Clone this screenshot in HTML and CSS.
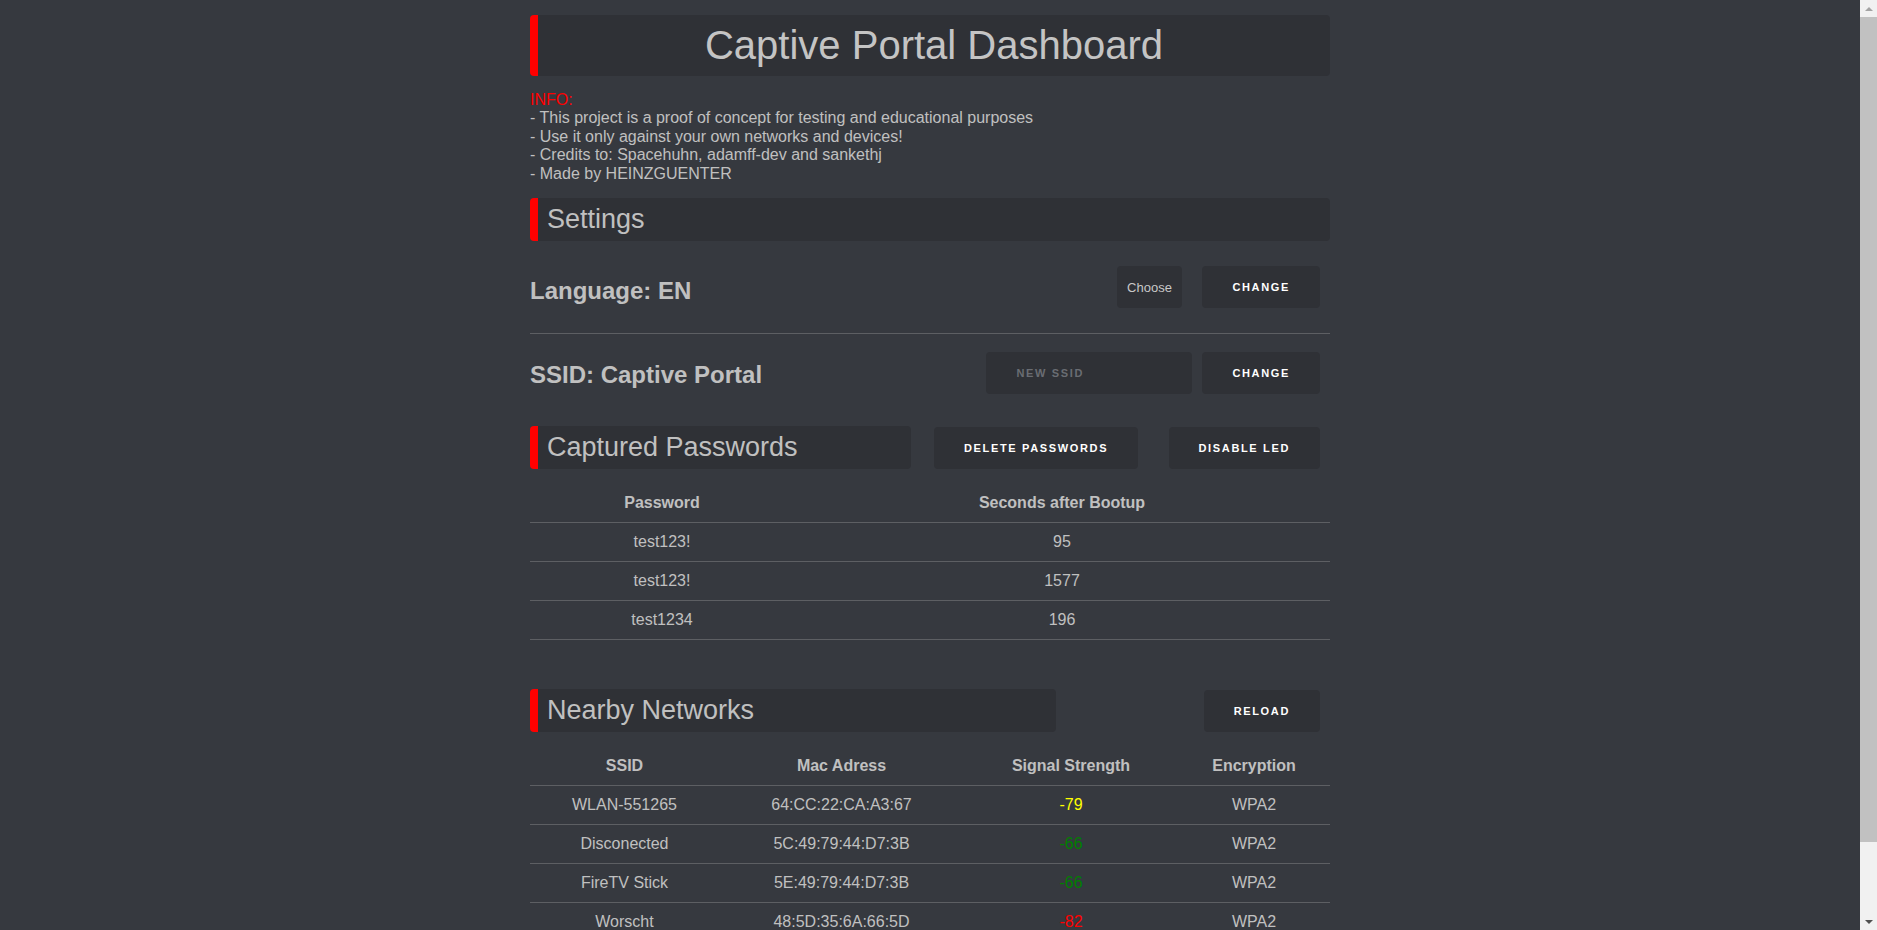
FILE: index.html
```html
<!DOCTYPE html>
<html lang="en">
<head>
<meta charset="utf-8">
<title>Captive Portal Dashboard</title>
<link rel="stylesheet" href="styles.css">
</head>
<body>
<div class="page">
  <h1 class="title-box">Captive Portal Dashboard</h1>

  <div class="info">
    <div class="info-label">INFO:</div>
    <div>- This project is a proof of concept for testing and educational purposes</div>
    <div>- Use it only against your own networks and devices!</div>
    <div>- Credits to: Spacehuhn, adamff-dev and sankethj</div>
    <div>- Made by HEINZGUENTER</div>
  </div>

  <h2 class="section-head settings-head">Settings</h2>

  <div class="setting-row lang-row">
    <span class="setting-label lang-label">Language: EN</span>
    <div class="setting-actions">
      <button class="choose">Choose</button>
      <button class="btn btn-change">CHANGE</button>
    </div>
  </div>
  <div class="divider"></div>
  <div class="setting-row ssid-row">
    <span class="setting-label ssid-label">SSID: Captive Portal</span>
    <div class="setting-actions">
      <input class="ssid-input" type="text" placeholder="NEW SSID">
      <button class="btn btn-change">CHANGE</button>
    </div>
  </div>

  <div class="section-row pw-row">
    <h2 class="section-head pw-head">Captured Passwords</h2>
    <button class="btn btn-delete">DELETE PASSWORDS</button>
    <button class="btn btn-led">DISABLE LED</button>
  </div>

  <table class="data pw-table">
    <thead>
      <tr><th class="c-pw">Password</th><th>Seconds after Bootup</th></tr>
    </thead>
    <tbody>
      <tr><td>test123!</td><td>95</td></tr>
      <tr><td>test123!</td><td>1577</td></tr>
      <tr><td>test1234</td><td>196</td></tr>
    </tbody>
  </table>

  <div class="section-row net-row">
    <h2 class="section-head net-head">Nearby Networks</h2>
    <button class="btn btn-reload">RELOAD</button>
  </div>

  <table class="data net-table">
    <thead>
      <tr>
        <th class="c-ssid">SSID</th>
        <th class="c-mac">Mac Adress</th>
        <th class="c-sig">Signal Strength</th>
        <th class="c-enc">Encryption</th>
      </tr>
    </thead>
    <tbody>
      <tr><td>WLAN-551265</td><td>64:CC:22:CA:A3:67</td><td class="sig-mid">-79</td><td>WPA2</td></tr>
      <tr><td>Disconected</td><td>5C:49:79:44:D7:3B</td><td class="sig-good">-66</td><td>WPA2</td></tr>
      <tr><td>FireTV Stick</td><td>5E:49:79:44:D7:3B</td><td class="sig-good">-66</td><td>WPA2</td></tr>
      <tr><td>Worscht</td><td>48:5D:35:6A:66:5D</td><td class="sig-bad">-82</td><td>WPA2</td></tr>
    </tbody>
  </table>
</div>

<div class="scrollbar" aria-hidden="true">
  <div class="sb-btn sb-up"></div>
  <div class="sb-track"><div class="sb-thumb"></div></div>
  <div class="sb-btn sb-down"></div>
</div>
</body>
</html>
```
FILE: styles.css
```css
html, body {
  margin: 0;
  padding: 0;
}

html {
  background: #36393f;
}

body {
  background: #36393f;
  color: #c0c0c0;
  font-family: "Liberation Sans", Arial, sans-serif;
  font-size: 16px;
  padding-right: 17px;
}

/* browser-style scrollbar overlay on the right edge */
.scrollbar {
  position: fixed;
  top: 0;
  right: 0;
  width: 17px;
  height: 100vh;
  background: #f1f1f1;
  display: flex;
  flex-direction: column;
}

.sb-btn {
  height: 17px;
  flex: 0 0 17px;
  display: flex;
  align-items: center;
  justify-content: center;
}

.sb-up::before {
  content: "";
  width: 0;
  height: 0;
  border-left: 4px solid transparent;
  border-right: 4px solid transparent;
  border-bottom: 4px solid #a3a3a3;
}

.sb-down::before {
  content: "";
  width: 0;
  height: 0;
  border-left: 4px solid transparent;
  border-right: 4px solid transparent;
  border-top: 4px solid #505050;
}

.sb-track {
  flex: 1;
  display: flex;
  flex-direction: column;
}

.sb-thumb {
  height: 825px;
  background: #c1c1c1;
}

.page {
  width: 800px;
  margin: 0 auto;
  padding: 15px 0 69px;
}

.title-box {
  margin: 0;
  background: #2f3136;
  border-left: 8px solid #ff0000;
  border-radius: 4px;
  padding: 7px 0;
  font-size: 40px;
  line-height: 47px;
  font-weight: normal;
  text-align: center;
  color: #c4c4c4;
}

.info {
  margin-top: 15px;
  line-height: 18.4px;
}

.info-label {
  color: #ff0000;
}

.section-head {
  margin: 0;
  background: #2f3136;
  border-left: 8px solid #ff0000;
  border-radius: 4px;
  padding: 6px 0 6px 9px;
  font-size: 27px;
  line-height: 31px;
  font-weight: normal;
  color: #c0c0c0;
}

.settings-head {
  margin-top: 15px;
}

.setting-row {
  display: flex;
  align-items: center;
  justify-content: space-between;
}

.lang-row {
  padding: 25px 0;
}

.ssid-row {
  padding-top: 18px;
}

.setting-label {
  font-size: 24px;
  line-height: 28px;
  font-weight: bold;
}

.lang-label {
  margin-top: 8px;
}

.ssid-label {
  margin-top: 4px;
}

.setting-actions {
  display: flex;
  align-items: center;
  margin-right: 10px;
}

.divider {
  height: 1px;
  background: #5d5f63;
}

button {
  font-family: "Liberation Sans", Arial, sans-serif;
  border: none;
  cursor: pointer;
}

.choose {
  height: 42px;
  padding: 0 10.5px;
  background: #2f3136;
  color: #c8c8c8;
  font-size: 13px;
  border-radius: 4px;
  margin-right: 20px;
}

.btn {
  height: 42px;
  padding: 0 30px;
  background: #2f3136;
  color: #ffffff;
  font-size: 11px;
  font-weight: bold;
  letter-spacing: 1.65px;
  border-radius: 4px;
}

.ssid-input {
  box-sizing: border-box;
  width: 206px;
  height: 42px;
  margin-right: 10px;
  padding: 0 0 0 30px;
  border: none;
  border-radius: 4px;
  background: #2f3136;
  color: #c0c0c0;
  font-family: "Liberation Sans", Arial, sans-serif;
  font-size: 11px;
  font-weight: bold;
  letter-spacing: 1.65px;
  outline: none;
}

.ssid-input::placeholder {
  color: #6a6d73;
}

.section-row {
  display: flex;
  align-items: center;
}

.pw-row {
  margin-top: 32px;
}

.pw-head {
  flex: 0 0 381px;
  box-sizing: border-box;
}

.btn-delete {
  margin-left: 23px;
}

.btn-led {
  margin-left: auto;
  margin-right: 10px;
}

.net-row {
  margin-top: 49px;
  justify-content: space-between;
}

.net-head {
  flex: 0 0 526px;
  box-sizing: border-box;
}

.btn-reload {
  margin-right: 10px;
}

.data {
  width: 100%;
  border-collapse: collapse;
  table-layout: fixed;
  text-align: center;
}

.pw-table {
  margin-top: 15px;
}

.net-table {
  margin-top: 15px;
}

.data th,
.data td {
  padding: 10px 0;
  line-height: 18px;
  border-bottom: 1px solid #5d5f63;
  font-size: 16px;
}

.data th {
  font-weight: bold;
}

.c-pw { width: 264px; }

.c-ssid { width: 189px; }
.c-mac { width: 245px; }
.c-sig { width: 214px; }
.c-enc { width: 152px; }

.sig-mid { color: #ffff00; }
.sig-good { color: #008000; }
.sig-bad { color: #ff0000; }
```
